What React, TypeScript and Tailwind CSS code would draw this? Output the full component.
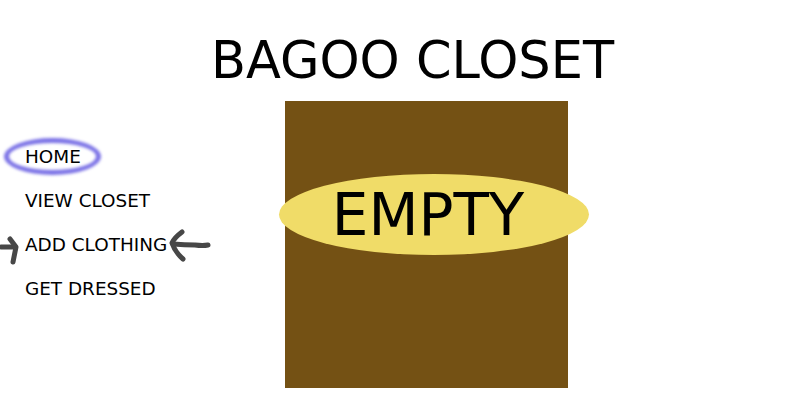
import React from "react";

const navItems = ["HOME", "VIEW CLOSET", "ADD CLOTHING", "GET DRESSED"];

const App: React.FC = () => {
  return (
    <div className="w-[800px] h-[400px] bg-white pl-[25px] font-['DejaVu_Sans',sans-serif] text-black overflow-hidden">
      <h1 className="pt-[35px] text-center text-[51px] leading-none">BAGOO CLOSET</h1>

      <div className="mt-[15px] flex">
        {/* Nav */}
        <ul className="w-[260px] pt-[47px] flex flex-col gap-[26px] text-[18.4px] leading-[18px]">
          {navItems.map((item) => (
            <li key={item} className="relative">
              {item === "HOME" && (
                <div className="absolute left-[-21px] top-[-10px] w-[97px] h-[37px] rounded-[50%] border-[5px] border-[#7b72e6] blur-[1.5px]" />
              )}
              {item === "ADD CLOTHING" && (
                <>
                  <svg
                    className="absolute left-[-25px] top-0"
                    width="22"
                    height="30"
                    viewBox="0 0 22 30"
                    fill="none"
                    stroke="#474747"
                    strokeWidth="5"
                    strokeLinecap="round"
                    strokeLinejoin="round"
                  >
                    <path d="M1 11 L15 11" />
                    <path d="M10 3 L16 11 L13 26" />
                  </svg>
                  <svg
                    className="absolute left-[142px] top-[-8px]"
                    width="48"
                    height="38"
                    viewBox="0 0 48 38"
                    fill="none"
                    stroke="#474747"
                    strokeWidth="5"
                    strokeLinecap="round"
                    strokeLinejoin="round"
                  >
                    <path d="M15 4 Q7 10 5 15 Q8 24 16 31" />
                    <path d="M6 16 Q18 17 28 17 Q36 18 41 17" />
                  </svg>
                </>
              )}
              <span className="relative">{item}</span>
            </li>
          ))}
        </ul>

        {/* Closet */}
        <div className="relative w-[283px] h-[287px] bg-[#745114]">
          <div className="absolute left-[-6px] top-[73px] w-[310px] h-[81px] rounded-[50%] bg-[#f0dc68] flex items-center justify-center pr-[12px]">
            <span className="text-[58px] leading-none">EMPTY</span>
          </div>
        </div>
      </div>
    </div>
  );
};

export default App;
